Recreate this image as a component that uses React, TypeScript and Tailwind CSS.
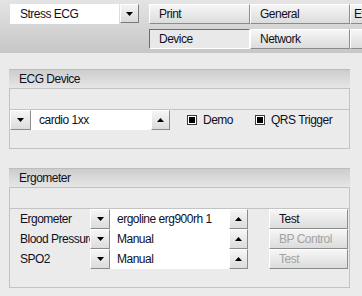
const Arrow = ({ up = false }: { up?: boolean }) => (
  <svg width="7" height="4" viewBox="0 0 7 4" className="block">
    {up ? <path d="M0 4h7L3.5 0z" fill="#000" /> : <path d="M0 0h7L3.5 4z" fill="#000" />}
  </svg>
);

const raised =
  "border border-t-white border-l-white border-b-[#8c8c8c] border-r-[#8c8c8c] bg-linear-to-b from-[#f6f6f6] to-[#dcdcdc]";

function ArrowButton({ up = false, w = "w-[20px]" }: { up?: boolean; w?: string }) {
  return (
    <div className={`${w} h-[20px] ${raised} flex items-center justify-center shrink-0`}>
      <Arrow up={up} />
    </div>
  );
}

function Checkbox({ label }: { label: string }) {
  return (
    <div className="flex items-center gap-[6px]">
      <div className="w-[10px] h-[10px] border border-[#3a3a3a] bg-white p-[1px]">
        <div className="w-full h-full bg-black" />
      </div>
      <span>{label}</span>
    </div>
  );
}

function PanelHeader({ title }: { title: string }) {
  return (
    <div className="h-[19px] border-t border-[#bdbdbd] bg-linear-to-b from-[#cdcdcd] to-[#e6e6e6] pl-[10px] leading-[18px]">
      {title}
    </div>
  );
}

const rows = [
  { label: "Ergometer", value: "ergoline erg900rh 1", action: "Test", enabled: true },
  { label: "Blood Pressure", value: "Manual", action: "BP Control", enabled: false },
  { label: "SPO2", value: "Manual", action: "Test", enabled: false },
];

export default function App() {
  return (
    <div className="w-[362px] h-[296px] overflow-hidden bg-[#ebebeb] text-[12px] tracking-[-0.5px] text-[#10101c] font-['Liberation_Sans',Arial,sans-serif]">
      {/* Top bar */}
      <div className="h-[53px] bg-linear-to-b from-[#e4e4e4] to-[#c7c7c7] flex items-start pt-[4px] pl-[10px]">
        <div className="flex items-start">
          <div className="w-[109px] h-[20px] bg-white pl-[10px] leading-[20px]">Stress ECG</div>
          <div className="ml-[1px] w-[19px] h-[19px] border border-t-white border-l-white border-b-[#7a7a7a] border-r-[#7a7a7a] bg-linear-to-b from-[#f4f4f4] to-[#dadada] flex items-center justify-center">
            <Arrow />
          </div>
        </div>
        <div className="ml-[10px] grid grid-cols-[101px_100px_100px] gap-y-[5px] shrink-0">
          <div className={`h-[20px] ${raised} pl-[9px] leading-[18px]`}>Print</div>
          <div className={`h-[20px] ${raised} pl-[9px] leading-[18px]`}>General</div>
          <div className={`h-[20px] ${raised} pl-[3px] leading-[18px]`}>Event</div>
          <div className="h-[20px] border border-t-[#6e6e6e] border-l-[#6e6e6e] border-b-white border-r-white bg-[#e9e9e9] pl-[9px] leading-[18px]">
            Device
          </div>
          <div className={`h-[20px] ${raised} pl-[9px] leading-[18px]`}>Network</div>
          <div className={`h-[20px] ${raised}`} />
        </div>
      </div>

      {/* ECG Device */}
      <div className="mt-[16px] ml-[9px] w-[341px]">
        <PanelHeader title="ECG Device" />
        <div className="border border-[#c3c3c3] h-[61px]">
          <div className="h-[21px] border-b border-[#c3c3c3]" />
          <div className="flex items-center h-[20px]">
            <ArrowButton w="w-[21px]" />
            <div className="w-[120px] h-[20px] bg-white pl-[8px] leading-[20px]">cardio 1xx</div>
            <ArrowButton up w="w-[19px]" />
            <div className="ml-[17px] flex items-center gap-[22px]">
              <Checkbox label="Demo" />
              <Checkbox label="QRS Trigger" />
            </div>
          </div>
        </div>
      </div>

      {/* Ergometer */}
      <div className="mt-[19px] ml-[9px] w-[341px]">
        <PanelHeader title="Ergometer" />
        <div className="border border-[#c3c3c3] h-[101px]">
          <div className="h-[21px] border-b border-[#c3c3c3]" />
          {rows.map((r) => (
            <div key={r.label + r.action} className="flex items-center h-[20px]">
              <div className="w-[80px] pl-[10px] whitespace-nowrap overflow-hidden">{r.label}</div>
              <ArrowButton />
              <div className="w-[119px] h-[20px] bg-white pl-[7px] leading-[20px] whitespace-nowrap overflow-hidden">
                {r.value}
              </div>
              <ArrowButton up w="w-[19px]" />
              <div
                className={`ml-[21px] w-[79px] h-[20px] ${raised} pl-[9px] leading-[18px] ${
                  r.enabled ? "text-[#10101c]" : "text-[#a3a3a3]"
                }`}
              >
                {r.action}
              </div>
            </div>
          ))}
        </div>
      </div>
    </div>
  );
}
